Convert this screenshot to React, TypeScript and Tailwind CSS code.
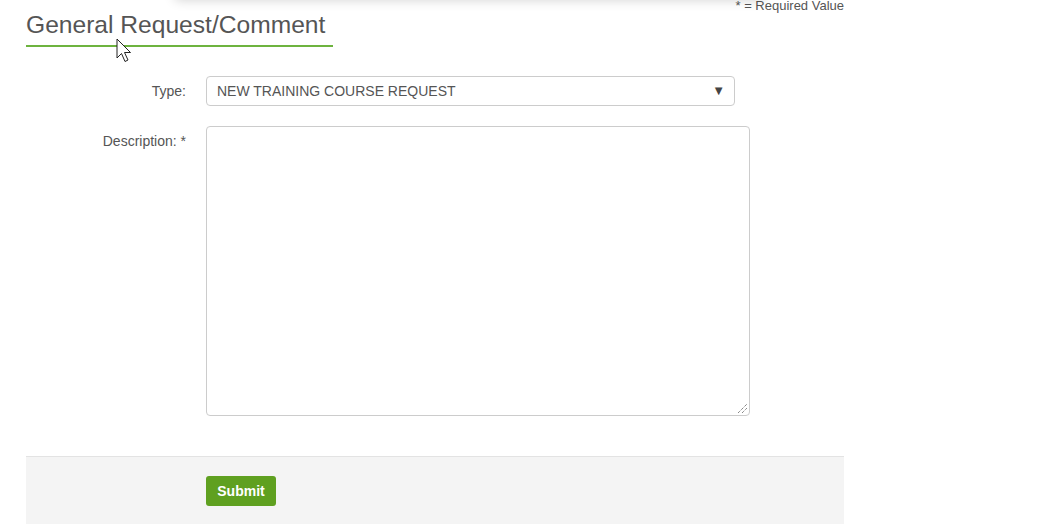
import React from "react";

export default function App() {
  return (
    <div
      className="relative w-[1043px] h-[524px] overflow-hidden bg-white text-[#555]"
      style={{ fontFamily: '"Liberation Sans", Arial, sans-serif' }}
    >
      {/* shadow of element above viewport */}
      <div className="absolute left-[175px] top-[-30px] w-[590px] h-[30px] bg-white shadow-[0_0_12px_rgba(0,0,0,0.18)]" />

      <div className="ml-[26px] w-[818px] flex flex-col">
        <div className="flex justify-end h-[13px] text-[13px] leading-[11px] text-[#555]">
          <span>* = Required Value</span>
        </div>
        <div className="w-[307px] border-b-2 border-[#6db33f] pb-[8px]">
          <h1 className="text-[24.6px] leading-[24px] text-[#555] font-normal">General Request/Comment</h1>
        </div>

        <div className="mt-[29px] flex items-center">
          <label className="w-[160px] text-right text-[14px] text-[#555]">Type:</label>
          <div className="ml-[20px] w-[529px] h-[30px] border border-[#ccc] rounded-[4px] flex items-center justify-between pl-[10px] pr-[9px]">
            <span className="text-[14px] text-[#555] uppercase">NEW TRAINING COURSE REQUEST</span>
            <span className="text-[13px] text-[#444]">▼</span>
          </div>
        </div>

        <div className="mt-[20px] flex items-start">
          <label className="w-[160px] text-right text-[14px] text-[#555] pt-[5px]">Description: *</label>
          <div className="relative ml-[20px] w-[544px] h-[290px] border border-[#ccc] rounded-[4px]">
            <svg className="absolute right-[1px] bottom-[1px]" width="12" height="12" viewBox="0 0 12 12">
              <line x1="2" y1="11" x2="11" y2="2" stroke="#555" strokeWidth="1" strokeDasharray="1 1" />
              <line x1="6" y1="11" x2="11" y2="6" stroke="#555" strokeWidth="1" strokeDasharray="1 1" />
            </svg>
          </div>
        </div>

        <div className="mt-[40px] h-[68px] bg-[#f4f4f4] border-t border-[#e3e3e3] flex items-start pt-[19px]">
          <button className="ml-[180px] w-[70px] h-[30px] bg-[#5fa020] rounded-[3px] text-white font-bold text-[14px]">
            Submit
          </button>
        </div>
      </div>

      {/* mouse cursor */}
      <svg className="absolute left-[116px] top-[38px]" width="20" height="28" viewBox="0 0 20 28">
        <path d="M1 1 L1 20 L5.5 15.5 L9 23.5 L12 22 L8.5 14.5 L14.5 14.5 Z" fill="white" stroke="#222" strokeWidth="1" strokeLinejoin="miter" />
      </svg>
    </div>
  );
}
